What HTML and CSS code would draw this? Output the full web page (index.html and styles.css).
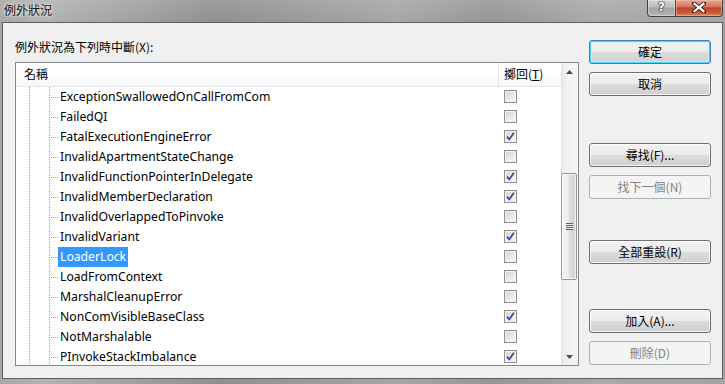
FILE: index.html
```html
<!DOCTYPE html>
<html lang="zh-Hant">
<head>
<meta charset="utf-8">
<title>例外狀況</title>
<link rel="stylesheet" href="styles.css">
</head>
<body>
<div class="window">
  <div class="titlebar">
    <span class="title">例外狀況</span>
    <div class="caption-btns">
      <div class="cap help"><span class="q">?</span></div>
      <div class="cap close">
        <svg width="14" height="11" viewBox="0 0 14 11"><path d="M2 1.5 L12 9.5 M12 1.5 L2 9.5" stroke="#3a1a12" stroke-width="4" stroke-linecap="square"/><path d="M2.5 1.8 L11.5 9.2 M11.5 1.8 L2.5 9.2" stroke="#ffffff" stroke-width="2.2" stroke-linecap="square"/></svg>
      </div>
    </div>
  </div>
  <div class="client">
    <div class="left">
      <div class="label">例外狀況為下列時中斷(X):</div>
      <div class="list">
        <div class="list-main">
          <div class="header">
            <div class="col-name">名稱</div>
            <div class="col-throw">擲回(<u>T</u>)</div>
          </div>
          <div class="body">
            <div class="row"><div class="name"><span class="text">ExceptionSwallowedOnCallFromCom</span></div><div class="chk"><span class="box"></span></div></div>
            <div class="row"><div class="name"><span class="text">FailedQI</span></div><div class="chk"><span class="box"></span></div></div>
            <div class="row"><div class="name"><span class="text">FatalExecutionEngineError</span></div><div class="chk"><span class="box checked"><svg width="11" height="11" viewBox="0 0 11 11"><path d="M2 5.6 L4.3 8.4 L8.9 1.8" fill="none" stroke="#2b4a9c" stroke-width="1.7"/></svg></span></div></div>
            <div class="row"><div class="name"><span class="text">InvalidApartmentStateChange</span></div><div class="chk"><span class="box"></span></div></div>
            <div class="row"><div class="name"><span class="text">InvalidFunctionPointerInDelegate</span></div><div class="chk"><span class="box checked"><svg width="11" height="11" viewBox="0 0 11 11"><path d="M2 5.6 L4.3 8.4 L8.9 1.8" fill="none" stroke="#2b4a9c" stroke-width="1.7"/></svg></span></div></div>
            <div class="row"><div class="name"><span class="text">InvalidMemberDeclaration</span></div><div class="chk"><span class="box checked"><svg width="11" height="11" viewBox="0 0 11 11"><path d="M2 5.6 L4.3 8.4 L8.9 1.8" fill="none" stroke="#2b4a9c" stroke-width="1.7"/></svg></span></div></div>
            <div class="row"><div class="name"><span class="text">InvalidOverlappedToPinvoke</span></div><div class="chk"><span class="box"></span></div></div>
            <div class="row"><div class="name"><span class="text">InvalidVariant</span></div><div class="chk"><span class="box checked"><svg width="11" height="11" viewBox="0 0 11 11"><path d="M2 5.6 L4.3 8.4 L8.9 1.8" fill="none" stroke="#2b4a9c" stroke-width="1.7"/></svg></span></div></div>
            <div class="row"><div class="name"><span class="text selected">LoaderLock</span></div><div class="chk"><span class="box"></span></div></div>
            <div class="row"><div class="name"><span class="text">LoadFromContext</span></div><div class="chk"><span class="box"></span></div></div>
            <div class="row"><div class="name"><span class="text">MarshalCleanupError</span></div><div class="chk"><span class="box"></span></div></div>
            <div class="row"><div class="name"><span class="text">NonComVisibleBaseClass</span></div><div class="chk"><span class="box checked"><svg width="11" height="11" viewBox="0 0 11 11"><path d="M2 5.6 L4.3 8.4 L8.9 1.8" fill="none" stroke="#2b4a9c" stroke-width="1.7"/></svg></span></div></div>
            <div class="row"><div class="name"><span class="text">NotMarshalable</span></div><div class="chk"><span class="box"></span></div></div>
            <div class="row"><div class="name"><span class="text">PInvokeStackImbalance</span></div><div class="chk"><span class="box checked"><svg width="11" height="11" viewBox="0 0 11 11"><path d="M2 5.6 L4.3 8.4 L8.9 1.8" fill="none" stroke="#2b4a9c" stroke-width="1.7"/></svg></span></div></div>
          </div>
        </div>
        <div class="vscroll">
          <div class="arrow"><svg width="7" height="4" viewBox="0 0 7 4"><path d="M0 4 L3.5 0 L7 4 Z" fill="#4a4a4a"/></svg></div>
          <div class="track">
            <div class="thumb"><span class="grip"></span></div>
          </div>
          <div class="arrow"><svg width="7" height="4" viewBox="0 0 7 4"><path d="M0 0 L3.5 4 L7 0 Z" fill="#4a4a4a"/></svg></div>
        </div>
      </div>
    </div>
    <div class="buttons">
      <div class="group g1">
        <div class="btn default">確定</div>
        <div class="btn">取消</div>
      </div>
      <div class="group g2">
        <div class="btn">尋找(F)...</div>
        <div class="btn disabled">找下一個(N)</div>
      </div>
      <div class="group g3">
        <div class="btn">全部重設(R)</div>
      </div>
      <div class="group g4">
        <div class="btn">加入(A)...</div>
        <div class="btn disabled">刪除(D)</div>
      </div>
    </div>
  </div>
</div>
</body>
</html>
```

FILE: styles.css
```css
* { box-sizing: border-box; }
html, body { margin: 0; padding: 0; }
body {
  width: 725px;
  height: 384px;
  overflow: hidden;
  font-family: "Noto Sans", "Noto Sans CJK TC", sans-serif;
  font-size: 12px;
  color: #000;
  background: #9c9c9c;
}
.window {
  width: 725px;
  height: 384px;
  display: flex;
  flex-direction: column;
  padding: 0 2px 5px 2px;
  background:
    linear-gradient(to bottom, rgba(255,255,255,0.12), rgba(255,255,255,0) 22px),
    linear-gradient(to right, #a7a7a7 0%, #b2b2b2 6%, #a4a4a4 16%, #8f8f8f 30%, #9a9a9a 42%, #a6a6a6 55%, #959595 68%, #a9a9a9 82%, #a3a3a3 100%);
}
.titlebar {
  height: 22px;
  display: flex;
  align-items: flex-start;
  justify-content: space-between;
  flex: none;
}
.title {
  margin: 2px 0 0 2px;
  font-family: "Noto Sans CJK TC", sans-serif;
  font-size: 12px;
  line-height: 16px;
  color: #141414;
  text-shadow: 0 0 5px #e8e8e8, 0 0 3px #f2f2f2;
}
.caption-btns { display: flex; }
.cap {
  height: 17px;
  border: 1px solid #424242;
  border-top: none;
  display: flex;
  align-items: center;
  justify-content: center;
}
.help {
  width: 29px;
  border-radius: 0 0 0 4px;
  background: linear-gradient(to bottom, #d2d2d2 0%, #bdbdbd 45%, #a3a3a3 50%, #b4b4b4 100%);
  box-shadow: inset 0 0 0 1px rgba(255,255,255,0.35);
}
.q {
  font-family: "DejaVu Sans", sans-serif;
  font-weight: bold;
  font-size: 12px;
  line-height: 12px;
  color: #fff;
  text-shadow: 0 0 1px #222, 0 0 1px #222, 0 0 2px #333;
  margin-top: -2px;
}
.close {
  width: 47px;
  border-left: none;
  border-radius: 0 0 4px 0;
  background: linear-gradient(to bottom, #e8a493 0%, #d87a63 40%, #c4422a 50%, #cc5a3a 80%, #de8a5c 100%);
  box-shadow: inset 0 0 0 1px rgba(255,220,200,0.35);
}
.close svg { margin-top: -2px; }

.client {
  flex: 1;
  border: 1px solid #5e5e5e;
  background: #f0f0f0;
  display: flex;
  padding: 16px 11px 0 12px;
  gap: 10px;
  font-family: "Noto Sans CJK TC", sans-serif;
}
.left { width: 564px; flex: none; }
.label {
  height: 15px;
  line-height: 15px;
  margin-bottom: 8px;
  color: #000;
}
.list {
  width: 564px;
  height: 304px;
  border: 1px solid #828790;
  background: #fff;
  display: flex;
  overflow: hidden;
}
.list-main { flex: 1; min-width: 0; display: flex; flex-direction: column; }
.header {
  height: 24px;
  flex: none;
  display: flex;
  border-bottom: 1px solid #e3e5e8;
  background: linear-gradient(to bottom, #ffffff 0%, #ffffff 50%, #f6f7f9 100%);
}
.col-name {
  width: 483px;
  padding: 2px 0 0 8px;
  line-height: 18px;
  border-right: 1px solid #e3e5e8;
}
.col-throw {
  padding: 2px 0 0 5px;
  line-height: 18px;
}
.body {
  flex: 1;
  overflow: hidden;
  font-family: "Noto Sans", sans-serif;
  background-image:
    repeating-linear-gradient(to bottom, #a0a0a0 0 1px, transparent 1px 2px),
    repeating-linear-gradient(to bottom, #a0a0a0 0 1px, transparent 1px 2px);
  background-size: 1px 100%, 1px 100%;
  background-position: 13px 0, 33px 0;
  background-repeat: no-repeat;
}
.row { height: 20px; display: flex; }
.name {
  width: 484px;
  padding-left: 42px;
  background-image: repeating-linear-gradient(to right, #a0a0a0 0 1px, transparent 1px 2px);
  background-size: 9px 1px;
  background-position: 33px 10px;
  background-repeat: no-repeat;
}
.text {
  display: inline-block;
  height: 20px;
  line-height: 20px;
  padding: 0 2px;
  font-size: 12.2px;
  color: #000;
}
.text.selected { background: #3399ff; color: #fff; }
.chk { padding: 3px 0 0 4px; }
.box {
  display: block;
  width: 13px;
  height: 13px;
  border: 1px solid #8e8f8f;
  background: linear-gradient(135deg, #cfcfcf 0%, #e6e6e6 45%, #f9f9f9 100%);
  box-shadow: inset 0 0 0 1px #f4f4f4;
}
.box svg { display: block; }

.vscroll {
  width: 17px;
  flex: none;
  display: flex;
  flex-direction: column;
  background: linear-gradient(to right, #e6e6e6 0%, #f1f1f1 30%, #f6f6f6 100%);
}
.arrow {
  height: 17px;
  flex: none;
  display: flex;
  align-items: center;
  justify-content: center;
}
.track { flex: 1; }
.thumb {
  width: 16px;
  height: 107px;
  margin-top: 93px;
  border: 1px solid #969696;
  border-radius: 2px;
  background: linear-gradient(to right, #f4f4f4 0%, #ececec 45%, #dcdcdc 55%, #d2d2d2 100%);
  box-shadow: inset 0 0 0 1px rgba(255,255,255,0.7);
  display: flex;
  align-items: center;
  justify-content: center;
}
.grip {
  width: 7px;
  height: 7px;
  background: repeating-linear-gradient(to bottom, #5f5f5f 0 1px, #f0f0f0 1px 2px);
}

.buttons { width: 122px; flex: none; display: flex; flex-direction: column; }
.group { display: flex; flex-direction: column; gap: 8px; }
.g1 { margin-top: 1px; }
.g2 { margin-top: 47px; }
.g3 { margin-top: 41px; }
.g4 { margin-top: 45px; }
.btn {
  height: 24px;
  border: 1px solid #707070;
  border-radius: 3px;
  background: linear-gradient(to bottom, #f2f2f2 0%, #ebebeb 50%, #dddddd 50%, #cfcfcf 100%);
  box-shadow: inset 0 0 0 1px rgba(255,255,255,0.75);
  display: flex;
  align-items: center;
  justify-content: center;
  font-size: 12px;
  line-height: 16px;
  color: #000;
}
.btn.default {
  border-color: #3c7fb1;
  box-shadow: inset 0 0 0 1px #48d5fa, inset 0 0 0 2px rgba(200,240,255,0.6);
}
.btn.disabled {
  border-color: #adb2b5;
  background: #f4f4f4;
  box-shadow: none;
  color: #838383;
}
```
